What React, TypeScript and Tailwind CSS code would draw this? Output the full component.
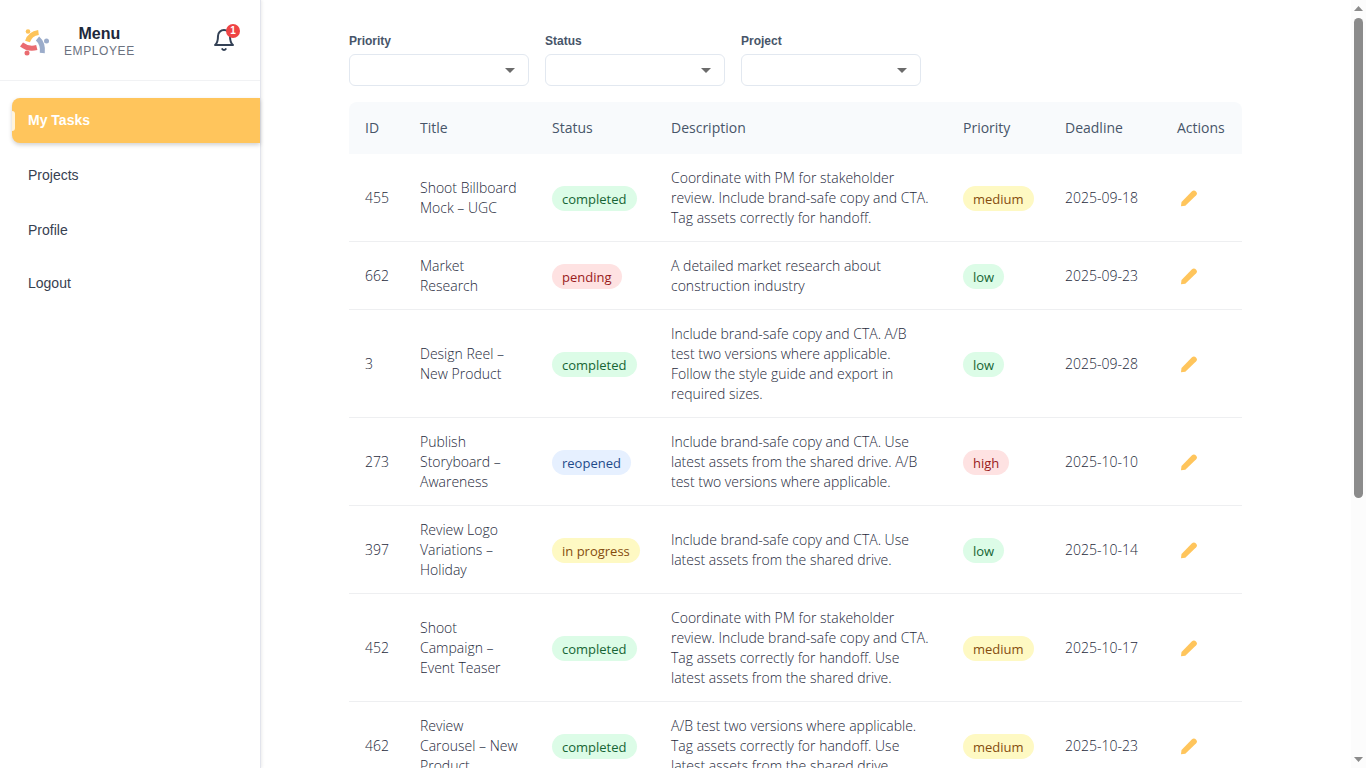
import { useState } from "react";

type Tone = "green" | "red" | "blue" | "yellow";

const TONES: Record<Tone, string> = {
  green: "bg-[#dcfce7] text-[#166534]",
  red: "bg-[#fee2e2] text-[#991b1b]",
  blue: "bg-[#e6f0ff] text-[#1e4a8a]",
  yellow: "bg-[#fef9c3] text-[#854d0e]",
};

const STATUS_TONE: Record<string, Tone> = {
  completed: "green",
  pending: "red",
  reopened: "blue",
  "in progress": "yellow",
};

const PRIORITY_TONE: Record<string, Tone> = {
  low: "green",
  medium: "yellow",
  high: "red",
};

interface Task {
  id: number;
  title: string;
  status: string;
  description: string;
  priority: string;
  deadline: string;
}

const TASKS: Task[] = [
  { id: 455, title: "Shoot Billboard\nMock – UGC", status: "completed", description: "Coordinate with PM for stakeholder\nreview. Include brand-safe copy and CTA.\nTag assets correctly for handoff.", priority: "medium", deadline: "2025-09-18" },
  { id: 662, title: "Market\nResearch", status: "pending", description: "A detailed market research about\nconstruction industry", priority: "low", deadline: "2025-09-23" },
  { id: 3, title: "Design Reel –\nNew Product", status: "completed", description: "Include brand-safe copy and CTA. A/B\ntest two versions where applicable.\nFollow the style guide and export in\nrequired sizes.", priority: "low", deadline: "2025-09-28" },
  { id: 273, title: "Publish\nStoryboard –\nAwareness", status: "reopened", description: "Include brand-safe copy and CTA. Use\nlatest assets from the shared drive. A/B\ntest two versions where applicable.", priority: "high", deadline: "2025-10-10" },
  { id: 397, title: "Review Logo\nVariations –\nHoliday", status: "in progress", description: "Include brand-safe copy and CTA. Use\nlatest assets from the shared drive.", priority: "low", deadline: "2025-10-14" },
  { id: 452, title: "Shoot\nCampaign –\nEvent Teaser", status: "completed", description: "Coordinate with PM for stakeholder\nreview. Include brand-safe copy and CTA.\nTag assets correctly for handoff. Use\nlatest assets from the shared drive.", priority: "medium", deadline: "2025-10-17" },
  { id: 462, title: "Review\nCarousel – New\nProduct", status: "completed", description: "A/B test two versions where applicable.\nTag assets correctly for handoff. Use\nlatest assets from the shared drive.", priority: "medium", deadline: "2025-10-23" },
];

const FILTERS = [
  { id: "priority", label: "Priority", options: ["low", "medium", "high"] },
  { id: "status", label: "Status", options: ["completed", "pending", "reopened", "in progress"] },
  { id: "project", label: "Project", options: [] as string[] },
];

function Logo() {
  return (
    <svg viewBox="0 0 30 30" className="mt-1 size-[30px] shrink-0" fill="none" aria-hidden="true">
      <circle cx="8" cy="4.500" r="2.300" fill="#fdc35a" />
      <path d="M7.500 14.500C9 10 12.500 6.300 18.500 5.500" stroke="#fdc35a" strokeWidth="5" />
      <circle cx="26.500" cy="14" r="2.500" fill="#9bacca" />
      <path d="M17.500 11.500C21.500 15 23 19.500 22.300 26" stroke="#9bacca" strokeWidth="5" />
      <circle cx="7" cy="26" r="2.500" fill="#ea6b70" />
      <path d="M1.500 17.500C6 21 11 22 16.800 20.500" stroke="#ea6b70" strokeWidth="5" />
    </svg>
  );
}

function Bell() {
  return (
    <svg viewBox="0 0 24 24" className="size-6" fill="none" stroke="#334155" strokeWidth="2" strokeLinecap="round" strokeLinejoin="round" aria-hidden="true">
      <path d="M18 8A6 6 0 0 0 6 8c0 7-3 9-3 9h18s-3-2-3-9" />
      <path d="M13.730 21a2 2 0 0 1-3.460 0" />
    </svg>
  );
}

function Pencil() {
  return (
    <svg viewBox="0 0 18 18" className="size-[18px]" fill="#ffc55c" aria-hidden="true">
      <path d="M1 17.200L1.500 13L12 2.200C14.500-.3 18.600 3.700 16.200 6.300L5.300 16.700Z" />
    </svg>
  );
}

function Pill({ text, tone }: { text: string; tone: Tone }) {
  return (
    <span className={`inline-block rounded-full px-2.5 pt-[3px] pb-px text-[13px] leading-[21px] font-medium whitespace-nowrap ${TONES[tone]}`}>
      {text}
    </span>
  );
}

function Sidebar() {
  return (
    <aside className="z-10 flex w-[261px] shrink-0 flex-col border-r border-[#e2e4ec] bg-white shadow-[1px_0_3px_rgba(0,0,0,0.08)]">
      <div className="flex h-[81px] items-center border-b border-[#f1f2f4] pl-5">
        <Logo />
        <div className="ml-3.5 pt-1 text-center">
          <h1 className="text-base leading-[18px] font-bold text-[#1e293b]">Menu</h1>
          <p className="text-xs leading-4 tracking-wider text-[#6b7280]">EMPLOYEE</p>
        </div>
        <button type="button" aria-label="Notifications" className="relative mr-6 ml-auto">
          <Bell />
          <span className="absolute -top-1 -right-1 flex size-3.5 items-center justify-center rounded-full bg-[#ef4444] text-[10px] leading-none font-bold text-white">
            1
          </span>
        </button>
      </div>
      <nav className="flex flex-col gap-2 pt-[17px] pl-3 text-sm text-[#374151]">
        <a href="#tasks" aria-current="page" className="flex h-[45px] items-center rounded-l-lg bg-[#ffc55c] font-bold text-white shadow-[0_2px_4px_rgba(0,0,0,0.18)]">
          <span className="h-5 w-[3px] rounded-r-sm bg-[#fff4dc]" />
          <span className="ml-[13px] pb-0.5">My Tasks</span>
        </a>
        <a href="#projects" className="flex h-12 items-center px-4">Projects</a>
        <a href="#profile" className="flex h-[46px] items-center px-4">Profile</a>
        <button type="button" className="flex h-11 items-center px-4 text-left">Logout</button>
      </nav>
    </aside>
  );
}

function Filters() {
  const [values, setValues] = useState<Record<string, string>>({});
  return (
    <div className="flex gap-4">
      {FILTERS.map((f) => (
        <div key={f.id} className="flex w-[180px] flex-col gap-[5px]">
          <label htmlFor={f.id} className="text-xs leading-4 font-bold text-[#475569]">{f.label}</label>
          <div className="relative">
            <select
              id={f.id}
              value={values[f.id] ?? ""}
              onChange={(e) => setValues({ ...values, [f.id]: e.target.value })}
              className="h-8 w-full appearance-none rounded-md border border-[#e2e8f0] bg-white px-3 text-sm"
            >
              <option value=""></option>
              {f.options.map((o) => (
                <option key={o}>{o}</option>
              ))}
            </select>
            <svg viewBox="0 0 10 5" className="pointer-events-none absolute top-3.5 right-3.5 h-[5px] w-2.5" fill="#6b6b6b" aria-hidden="true">
              <path d="M0 0h10L5 5z" />
            </svg>
          </div>
        </div>
      ))}
    </div>
  );
}

function TaskTable() {
  const th = "px-4 text-left font-medium";
  const td = "px-4 pt-3.5 pb-[13px] whitespace-pre-line";
  const pillCell = "px-4 pt-0.5";
  return (
    <table className="mt-4 w-full table-fixed border-separate border-spacing-0 font-['Open_Sans','Noto_Sans',sans-serif] text-sm leading-5 font-light text-[#1e293b]">
      <colgroup>
        <col className="w-[55px]" />
        <col className="w-[132px]" />
        <col className="w-[119px]" />
        <col />
        <col className="w-[102px]" />
        <col className="w-[112px]" />
        <col className="w-[81px]" />
      </colgroup>
      <thead>
        <tr className="h-[52px] text-[#475569] [&>th]:bg-[#f8fafc]">
          <th className={`${th} rounded-tl-lg`}>ID</th>
          <th className={th}>Title</th>
          <th className={th}>Status</th>
          <th className={th}>Description</th>
          <th className={th}>Priority</th>
          <th className={th}>Deadline</th>
          <th className={`${th} rounded-tr-lg`}>Actions</th>
        </tr>
      </thead>
      <tbody className="[&_td]:border-b [&_td]:border-[#eeeff1]">
        {TASKS.map((t) => (
          <tr key={t.id}>
            <td className={td}>{t.id}</td>
            <td className={td}>{t.title}</td>
            <td className={pillCell}><Pill text={t.status} tone={STATUS_TONE[t.status]} /></td>
            <td className={td}>{t.description}</td>
            <td className={pillCell}><Pill text={t.priority} tone={PRIORITY_TONE[t.priority]} /></td>
            <td className={td}>{t.deadline}</td>
            <td className="px-4">
              <button type="button" aria-label={`Edit task ${t.id}`} className="ml-[3px] flex">
                <Pencil />
              </button>
            </td>
          </tr>
        ))}
      </tbody>
    </table>
  );
}

function ScrollRail() {
  return (
    <div aria-hidden="true" className="flex w-[15px] shrink-0 flex-col items-center bg-[#fcfcfc] py-1.5">
      <svg viewBox="0 0 9 5" className="h-[5px] w-[9px] shrink-0" fill="#8b8b8b"><path d="M4.500 0L9 5H0z" /></svg>
      <div className="mt-[7px] flex w-[9px] grow flex-col">
        <div className="h-[65%] rounded-full bg-[#8b8b8b]" />
      </div>
      <svg viewBox="0 0 9 5" className="h-[5px] w-[9px] shrink-0" fill="#8b8b8b"><path d="M0 0h9L4.500 5z" /></svg>
    </div>
  );
}

export default function App() {
  return (
    <div className="flex h-screen bg-white font-['Liberation_Sans',Arial,sans-serif]">
      <Sidebar />
      <main className="min-w-0 grow overflow-hidden pt-[33px] pr-[109px] pl-[88px]">
        <Filters />
        <TaskTable />
      </main>
      <ScrollRail />
    </div>
  );
}
